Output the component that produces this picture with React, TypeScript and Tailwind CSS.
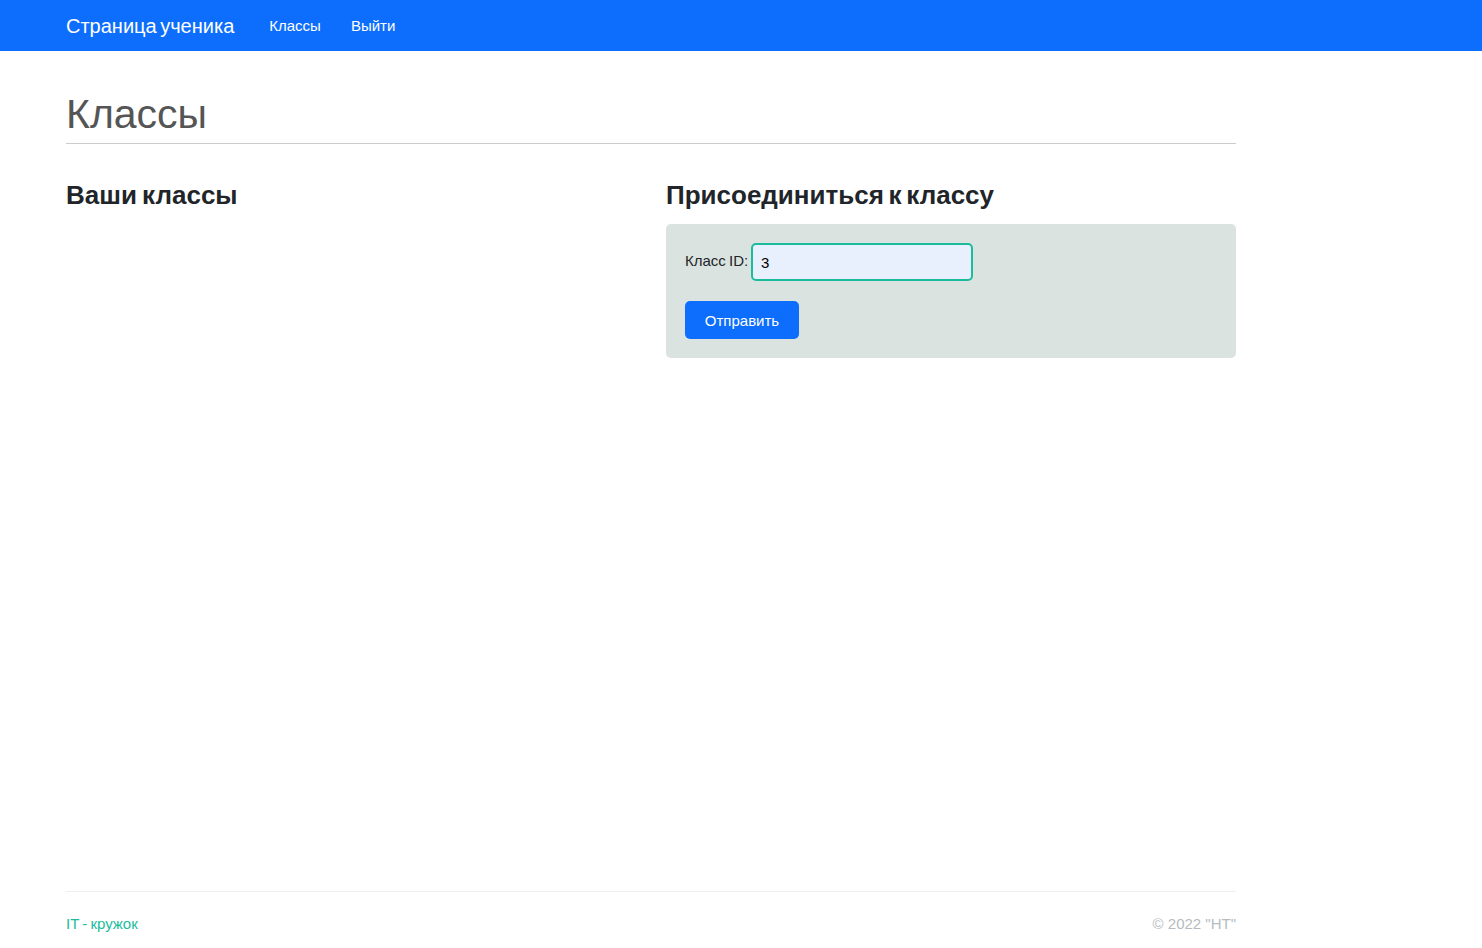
export default function App() {
  return (
    <div className="min-h-[948px] flex flex-col bg-white text-[#212529] font-['Liberation_Sans','Inter',sans-serif]">
      <nav className="h-[51px] bg-[#0d6efd] shrink-0">
        <div className="w-[1170px] ml-[66px] h-full flex items-center">
          <a className="text-[20px] text-white mr-[35px] [word-spacing:-2px]">Страница ученика</a>
          <a className="text-[15px] text-white mr-[30px] pt-[1px]">Классы</a>
          <a className="text-[15px] text-white pt-[1px]">Выйти</a>
        </div>
      </nav>

      <main className="w-[1170px] ml-[66px] flex-1">
        <h1 className="mt-[38px] h-[55px] border-b border-[#cccccc] text-[41px] leading-[50px] text-[#555]">Классы</h1>

        <div className="mt-[36px] flex gap-[30px]">
          <section className="w-[570px]">
            <h2 className="text-[26px] leading-[31px] font-bold [word-spacing:-2px]">Ваши классы</h2>
          </section>

          <section className="w-[570px]">
            <h2 className="text-[26px] leading-[31px] font-bold [word-spacing:-2.5px]">Присоединиться к классу</h2>
            <form className="mt-[13px] h-[134px] rounded-[5px] bg-[#dbe3e0] px-[19px] pt-[19px]">
              <div className="flex items-center h-[38px]">
                <label className="w-[66px] text-[15px] mb-[2px] [word-spacing:-1px]">Класс ID:</label>
                <input
                  defaultValue="3"
                  className="w-[222px] h-[38px] rounded-[5px] border-2 border-[#1abc9c] bg-[#e8f0fe] px-[8px] text-[15px] text-black outline-none"
                />
              </div>
              <button type="button" className="mt-[20px] w-[114px] h-[38px] rounded-[5px] bg-[#0d6efd] text-[15px] text-white pt-[2px]">
                Отправить
              </button>
            </form>
          </section>
        </div>
      </main>

      <footer className="w-[1170px] ml-[66px] h-[57px] border-t border-[#eeeeee] flex justify-between pt-[23px] text-[15px] leading-[18px]">
        <a className="text-[#1abc9c] [word-spacing:-1px]">IT - кружок</a>
        <span className="text-[#b5bcc2]">© 2022 "НТ"</span>
      </footer>
    </div>
  );
}
